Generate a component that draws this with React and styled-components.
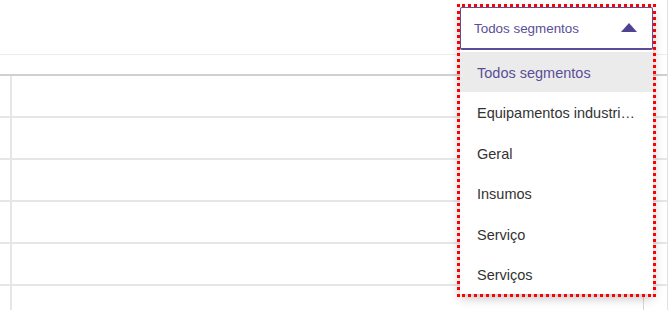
import React from "react";
import styled, { createGlobalStyle } from "styled-components";

const segments = [
  "Todos segmentos",
  "Equipamentos industriais",
  "Geral",
  "Insumos",
  "Serviço",
  "Serviços",
];

const GlobalStyle = createGlobalStyle`
  html, body {
    margin: 0;
    padding: 0;
    background: #fff;
    font-family: "Liberation Sans", Arial, sans-serif;
  }
`;

const App = () => {
  const selected = "Todos segmentos";
  const rows = [1, 2, 3, 4, 5, 6];

  return (
    <Page>
      <GlobalStyle />
      <Toolbar>
        <SelectWrap>
          <SelectBox>
            <SelectValue>{selected}</SelectValue>
            <Caret />
          </SelectBox>
          <Menu>
            {segments.map(s => (
              <MenuItem key={s} active={s === selected}>
                {s}
              </MenuItem>
            ))}
          </Menu>
        </SelectWrap>
      </Toolbar>
      <Table>
        <HeaderRow />
        {rows.map(r => (
          <Row key={r}>
            <FirstCell />
            <Cell />
            <LastCell />
          </Row>
        ))}
      </Table>
    </Page>
  );
};

const Page = styled.div`
  width: 667px;
  height: 310px;
  border-right: 1px solid #e2e2e2;
  overflow: hidden;
`;

const Toolbar = styled.div`
  height: 55px;
  border-bottom: 1px solid #ececec;
  position: relative;
  box-sizing: border-box;
`;

const SelectWrap = styled.div`
  position: absolute;
  top: 7px;
  left: 460px;
  width: 193px;
  z-index: 2;
  outline: 3px dotted #f00;
  background: #fff;
  box-shadow: 0 4px 10px rgba(0, 0, 0, 0.25);
`;

const SelectBox = styled.div`
  height: 43px;
  box-sizing: border-box;
  border: 1px solid #5b4e96;
  border-bottom-width: 2px;
  border-radius: 2px;
  display: flex;
  align-items: center;
  justify-content: space-between;
  padding: 0 15px 0 13px;
  background: #fff;
`;

const SelectValue = styled.span`
  font-size: 13.4px;
  color: #5b4e96;
`;

const Caret = styled.span`
  width: 0;
  height: 0;
  border-left: 8px solid transparent;
  border-right: 8px solid transparent;
  border-bottom: 9px solid #4f4290;
  margin-top: -1px;
`;

const Menu = styled.ul`
  list-style: none;
  margin: 0;
  padding: 2px 0 0;
`;

const MenuItem = styled.li`
  height: 40.4px;
  line-height: 42px;
  padding: 0 17px;
  font-size: 14.5px;
  white-space: nowrap;
  overflow: hidden;
  text-overflow: ellipsis;
  color: ${({ active }) => (active ? "#5b4e96" : "#333")};
  background: ${({ active }) => (active ? "#ebebeb" : "#fff")};
`;

const Table = styled.div`
  display: flex;
  flex-direction: column;
`;

const HeaderRow = styled.div`
  height: 19px;
  border-bottom: 2px solid #d0d0d0;
`;

const Row = styled.div`
  height: 40px;
  display: flex;
  border-bottom: 2px solid #e6e6e6;
`;

const FirstCell = styled.div`
  width: 10px;
  border-right: 2px solid #e6e6e6;
`;

const Cell = styled.div`
  flex: 1;
`;

const LastCell = styled.div`
  width: 23px;
  border-left: 1px solid #d6d6d6;
`;

export default App;
